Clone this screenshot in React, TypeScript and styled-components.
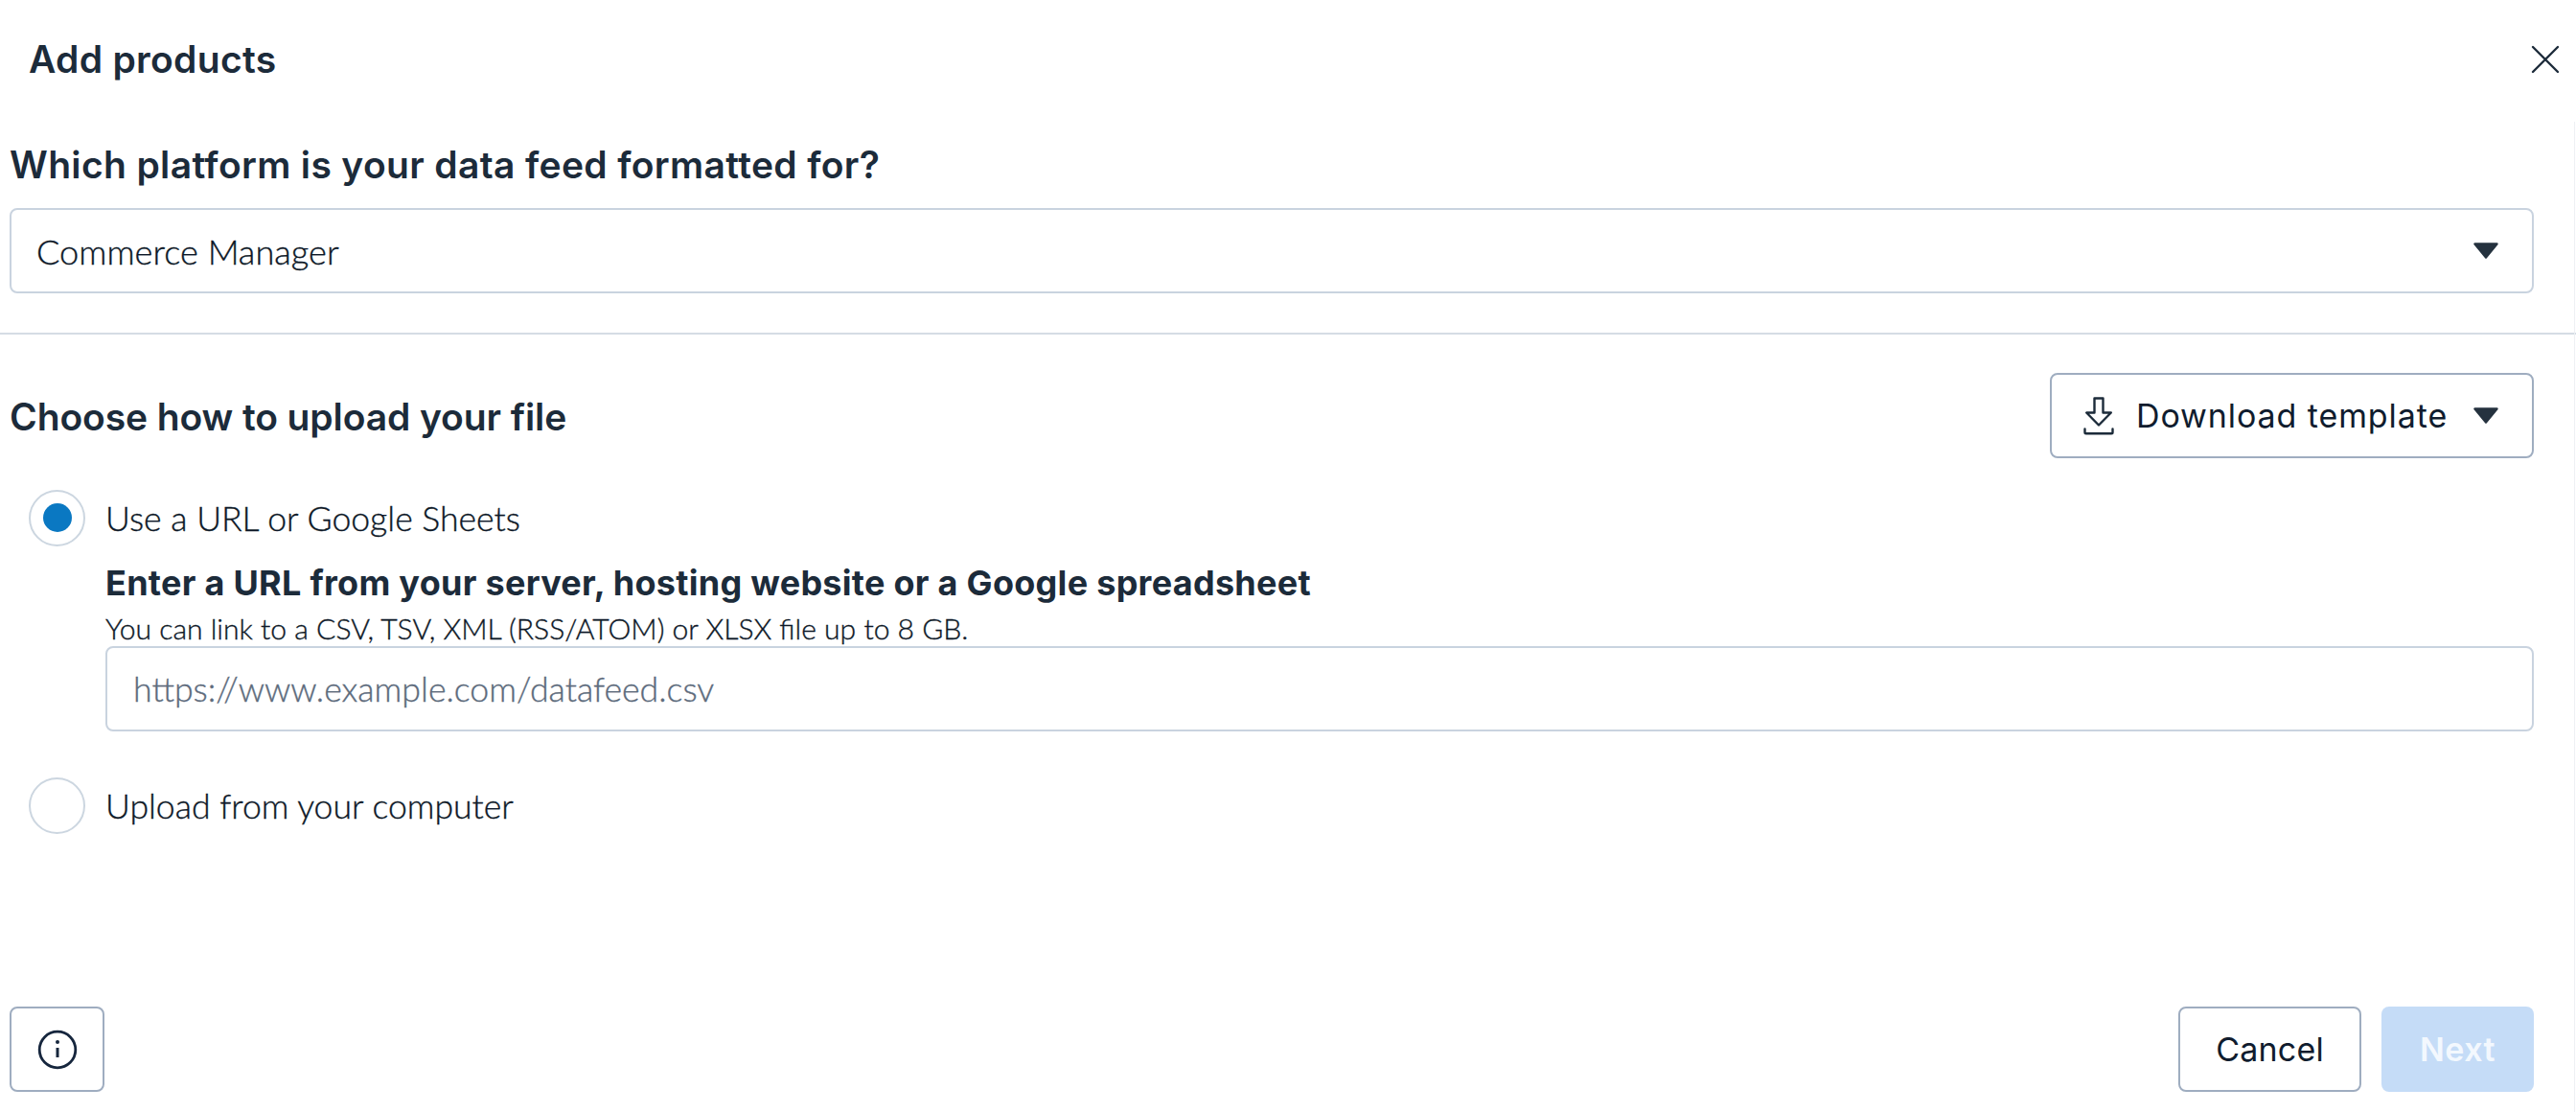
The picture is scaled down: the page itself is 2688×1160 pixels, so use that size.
import React from "react";
import styled, { createGlobalStyle } from "styled-components";

const Global = createGlobalStyle`
  html, body { margin: 0; padding: 0; background: #fff; }
  * { box-sizing: border-box; }
`;

const Page = styled.div`
  position: relative;
  width: 2688px;
  height: 1160px;
  overflow: hidden;
  display: flex;
  flex-direction: column;
  background: #fff;
  color: #1c2b3a;
  font-family: Lato, "Open Sans", sans-serif;
  &::after {
    content: "";
    position: absolute;
    top: 127px;
    right: 1px;
    bottom: 0;
    width: 1px;
    background: #eef0f3;
  }
`;

const Header = styled.header`
  height: 124px;
  flex: none;
  display: flex;
  align-items: center;
  justify-content: space-between;
  padding: 0 17px 0 30px;
`;

const Title = styled.h1`
  margin: 0;
  font: 600 39px/48px Inter, sans-serif;
  letter-spacing: 0.3px;
  color: #1c2b3a;
`;

const IconButton = styled.button`
  all: unset;
  display: flex;
`;

const Section = styled.section`
  padding: 0 44px 0 10px;
  flex: none;
`;

const QuestionSection = styled(Section)`
  padding-top: 24px;
`;

const Heading = styled.h2`
  margin: 0;
  font: 600 39px/48px Inter, sans-serif;
  letter-spacing: 0.35px;
  color: #1c2b3a;
`;

const UploadHeading = styled(Heading)`
  padding-top: 2px;
  letter-spacing: -0.1px;
`;

const Field = styled.div<{ $mt: number; $h: number }>`
  margin-top: ${(p) => p.$mt}px;
  height: ${(p) => p.$h}px;
  border: 2px solid #c9d3df;
  border-radius: 8px;
  background: #fff;
  display: flex;
  align-items: center;
  justify-content: space-between;
  padding: 0 34px 0 26px;
`;

const FieldText = styled.span<{ $muted?: boolean }>`
  font-size: ${(p) => (p.$muted ? 35.7 : 36.2)}px;
  font-weight: 300;
  color: ${(p) => (p.$muted ? "#5d6b7c" : "#0d1827")};
  -webkit-text-stroke: 0.35px ${(p) => (p.$muted ? "#5d6b7c" : "#0d1827")};
`;

const Divider = styled.hr`
  margin: 41px 0 0;
  border: 0;
  height: 2px;
  flex: none;
  background: #d5dce4;
`;

const UploadHead = styled.div`
  margin-top: 40px;
  display: flex;
  align-items: center;
  justify-content: space-between;
`;

const OutlineButton = styled.button<{ $w: number }>`
  width: ${(p) => p.$w}px;
  height: 89px;
  border: 2px solid #9fadc0;
  border-radius: 8px;
  background: #fff;
  display: flex;
  align-items: center;
  justify-content: center;
  color: #101c2e;
  font: 400 34px/40px Inter, sans-serif;
  letter-spacing: 0.2px;
  padding: 0;
`;

const DownloadButton = styled(OutlineButton)`
  justify-content: flex-start;
  padding: 0 34px 0 33px;
  gap: 23px;
`;

const DownloadLabel = styled.span`
  flex: 1;
  text-align: left;
  white-space: nowrap;
  letter-spacing: 0.9px;
`;

const Options = styled.div`
  margin-top: 32px;
  padding-left: 20px;
`;

const OptionRow = styled.label<{ $mt?: number }>`
  margin-top: ${(p) => p.$mt ?? 0}px;
  height: 60px;
  display: flex;
  align-items: center;
  gap: 21px;
  font-size: 35.6px;
  font-weight: 300;
  color: #0d1827;
  -webkit-text-stroke: 0.35px #0d1827;
`;

const Radio = styled.span<{ $on?: boolean }>`
  width: 59px;
  height: 59px;
  flex: none;
  border-radius: 50%;
  border: 2px solid #ccd6e0;
  background: #fff;
  display: flex;
  align-items: center;
  justify-content: center;
  &::after {
    content: "";
    width: 30px;
    height: 30px;
    border-radius: 50%;
    background: ${(p) => (p.$on ? "#0a78c2" : "transparent")};
  }
`;

const OptionBody = styled.div`
  margin-left: 100px;
  padding-top: 18px;
`;

const BodyTitle = styled.div`
  font: 700 36px/40px Inter, sans-serif;
  letter-spacing: 0.28px;
  color: #1c2b3a;
`;

const Helper = styled.div`
  margin-top: 12px;
  font-size: 30.1px;
  font-weight: 300;
  line-height: 30px;
  color: #0d1827;
  -webkit-text-stroke: 0.35px #0d1827;
`;

const UrlField = styled(Field)`
  padding-left: 27px;
`;

const Footer = styled.footer`
  margin-top: auto;
  padding: 0 44px 21px 10px;
  display: flex;
  align-items: center;
  justify-content: space-between;
`;

const Actions = styled.div`
  display: flex;
  gap: 21px;
`;

const NextButton = styled.button`
  width: 159px;
  height: 89px;
  border: 0;
  border-radius: 8px;
  background: #c5dcf7;
  color: #f3f8fe;
  font: 600 34px/40px Inter, sans-serif;
  letter-spacing: 0.5px;
  padding: 0;
`;

const Caret = () => (
  <svg width="28" height="17" viewBox="0 0 28 17" aria-hidden="true">
    <path d="M2.5 1.5h23L14 15.5z" fill="#25323f" stroke="#25323f" strokeWidth="2.4" strokeLinejoin="round" />
  </svg>
);

const Close = () => (
  <svg width="30" height="30" viewBox="0 0 30 30" aria-hidden="true">
    <path d="M2 2l26 26M28 2L2 28" fill="none" stroke="#1c2b3a" strokeWidth="2.4" strokeLinecap="round" />
  </svg>
);

const DownloadIcon = () => (
  <svg width="32" height="40" viewBox="0 0 32 40" fill="none" stroke="#1c2b3a" strokeWidth="2.4" aria-hidden="true">
    <path d="M11.5 1.5h9v15h8.3L16 29.5 3.2 16.5h8.3z" strokeLinejoin="round" />
    <path d="M1.5 33.5v3.5c0 .8.6 1.3 1.3 1.3h26.4c.7 0 1.3-.5 1.3-1.3v-3.5" strokeLinecap="round" />
  </svg>
);

const InfoIcon = () => (
  <svg width="42" height="42" viewBox="0 0 42 42" fill="none" aria-hidden="true">
    <circle cx="21" cy="21" r="18.8" stroke="#16263d" strokeWidth="2.8" />
    <circle cx="21" cy="13" r="2" fill="#16263d" />
    <path d="M21 19v10" stroke="#16263d" strokeWidth="3" />
  </svg>
);

export default function App() {
  return (
    <Page>
      <Global />
      <Header>
        <Title>Add products</Title>
        <IconButton aria-label="Close"><Close /></IconButton>
      </Header>
      <QuestionSection>
        <Heading>Which platform is your data feed formatted for?</Heading>
        <Field $mt={21} $h={89}>
          <FieldText>Commerce Manager</FieldText>
          <Caret />
        </Field>
      </QuestionSection>
      <Divider />
      <Section>
        <UploadHead>
          <UploadHeading>Choose how to upload your file</UploadHeading>
          <DownloadButton $w={505}>
            <DownloadIcon />
            <DownloadLabel>Download template</DownloadLabel>
            <Caret />
          </DownloadButton>
        </UploadHead>
      </Section>
      <Section>
        <Options>
          <OptionRow>
            <Radio $on />
            Use a URL or Google Sheets
          </OptionRow>
        </Options>
        <OptionBody>
          <BodyTitle>Enter a URL from your server, hosting website or a Google spreadsheet</BodyTitle>
          <Helper>You can link to a CSV, TSV, XML (RSS/ATOM) or XLSX file up to 8 GB.</Helper>
          <UrlField $mt={4} $h={89}>
            <FieldText $muted>https://www.example.com/datafeed.csv</FieldText>
          </UrlField>
        </OptionBody>
        <Options>
          <OptionRow $mt={47}>
            <Radio />
            Upload from your computer
          </OptionRow>
        </Options>
      </Section>
      <Footer>
        <OutlineButton $w={99} aria-label="Information"><InfoIcon /></OutlineButton>
        <Actions>
          <OutlineButton $w={191}>Cancel</OutlineButton>
          <NextButton>Next</NextButton>
        </Actions>
      </Footer>
    </Page>
  );
}
